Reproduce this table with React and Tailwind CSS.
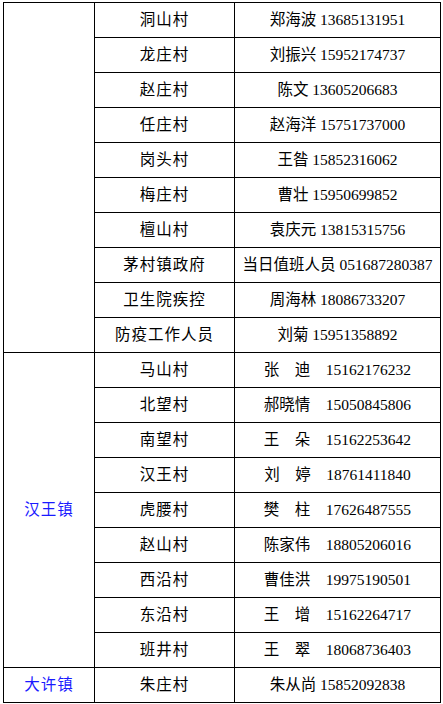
const GROUPS = [
  {
    town: '',
    rows: [
      ['洞山村', '郑海波 13685131951'],
      ['龙庄村', '刘振兴 15952174737'],
      ['赵庄村', '陈文 13605206683'],
      ['任庄村', '赵海洋 15751737000'],
      ['岗头村', '王昝 15852316062'],
      ['梅庄村', '曹壮 15950699852'],
      ['檀山村', '袁庆元 13815315756'],
      ['茅村镇政府', '当日值班人员 051687280387'],
      ['卫生院疾控', '周海林 18086733207'],
      ['防疫工作人员', '刘菊 15951358892'],
    ],
  },
  {
    town: '汉王镇',
    rows: [
      ['马山村', '张　迪　15162176232'],
      ['北望村', '郝晓情　15050845806'],
      ['南望村', '王　朵　15162253642'],
      ['汉王村', '刘　婷　18761411840'],
      ['虎腰村', '樊　柱　17626487555'],
      ['赵山村', '陈家伟　18805206016'],
      ['西沿村', '曹佳洪　19975190501'],
      ['东沿村', '王　增　15162264717'],
      ['班井村', '王　翠　18068736403'],
    ],
  },
  {
    town: '大许镇',
    rows: [['朱庄村', '朱从尚 15852092838']],
  },
]

export default function App() {
  return (
    <div className="w-[443px] h-[704px] bg-white pt-[2px] pl-[3px] font-['Liberation_Serif','Noto_Sans_CJK_SC',serif] text-[15.5px] text-black">
      <table className="w-[437px] table-fixed border-collapse border border-black">
        <colgroup>
          <col className="w-[91px]" />
          <col className="w-[140px]" />
          <col className="w-[206px]" />
        </colgroup>
        <tbody>
          {GROUPS.map((g) =>
            g.rows.map((r, i) => (
              <tr key={g.town + r[0]} className="h-[35px]">
                {i === 0 ? (
                  <td
                    rowSpan={g.rows.length}
                    className="border border-black p-0 text-center align-middle text-[#1a1aff] tracking-[1px]"
                  >
                    {g.town}
                  </td>
                ) : null}
                <td className="border border-black p-0 text-center align-middle tracking-[1px]">{r[0]}</td>
                <td className="border border-black p-0 text-center align-middle whitespace-nowrap">{r[1]}</td>
              </tr>
            ))
          )}
        </tbody>
      </table>
    </div>
  )
}
